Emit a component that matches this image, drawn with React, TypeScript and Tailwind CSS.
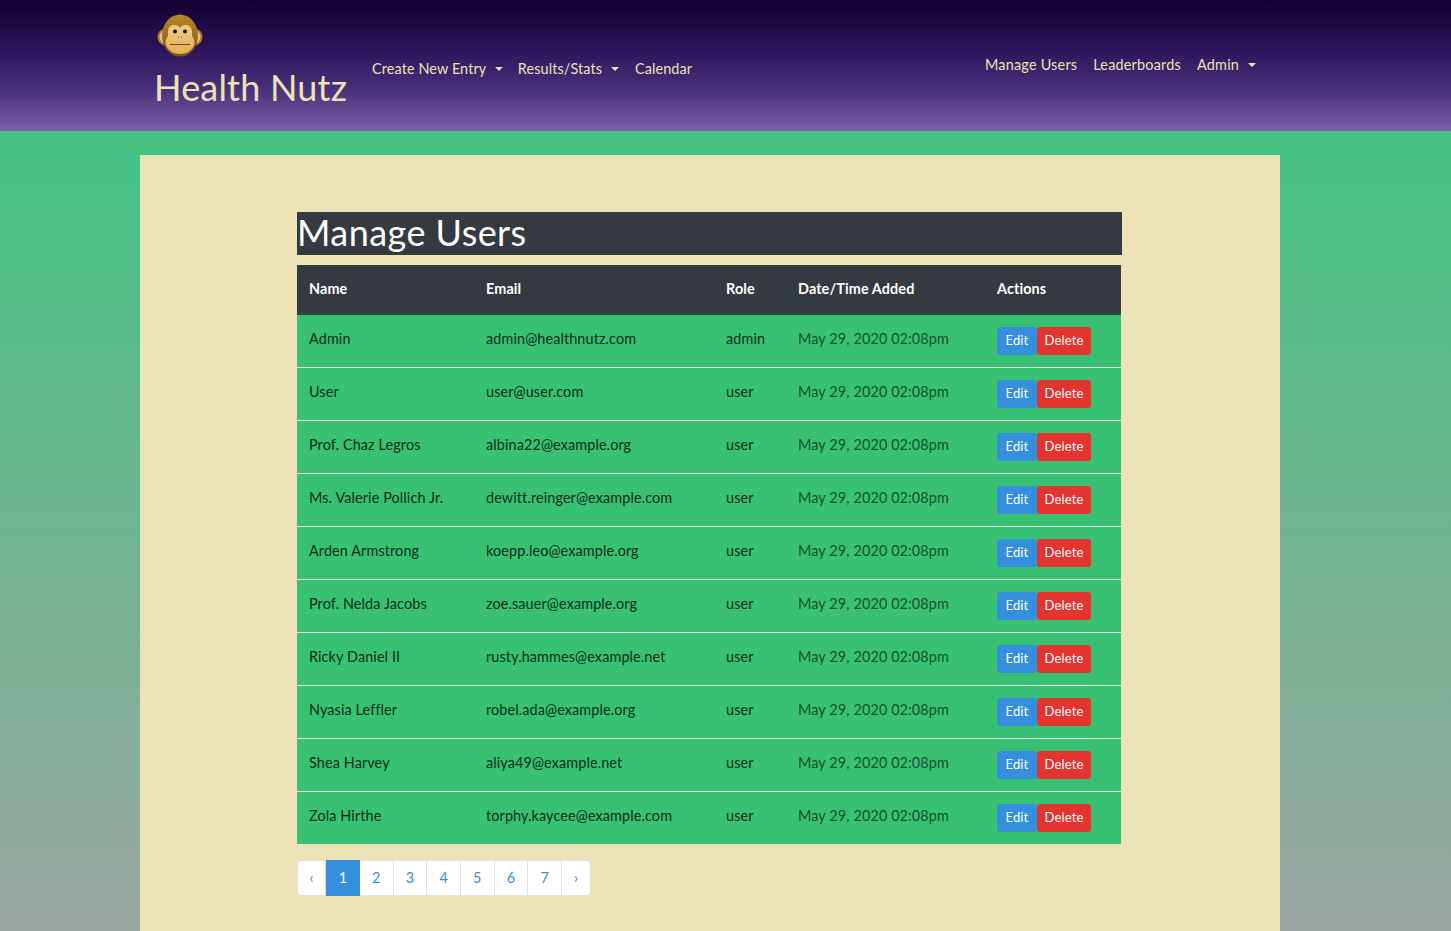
const users = [
  { name: "Admin", email: "admin@healthnutz.com", role: "admin" },
  { name: "User", email: "user@user.com", role: "user" },
  { name: "Prof. Chaz Legros", email: "albina22@example.org", role: "user" },
  { name: "Ms. Valerie Pollich Jr.", email: "dewitt.reinger@example.com", role: "user" },
  { name: "Arden Armstrong", email: "koepp.leo@example.org", role: "user" },
  { name: "Prof. Nelda Jacobs", email: "zoe.sauer@example.org", role: "user" },
  { name: "Ricky Daniel II", email: "rusty.hammes@example.net", role: "user" },
  { name: "Nyasia Leffler", email: "robel.ada@example.org", role: "user" },
  { name: "Shea Harvey", email: "aliya49@example.net", role: "user" },
  { name: "Zola Hirthe", email: "torphy.kaycee@example.com", role: "user" },
]

const pages = ["2", "3", "4", "5", "6", "7"]

const Caret = () => (
  <span className="ml-[5px] inline-block h-0 w-0 translate-y-[-3px] border-x-[4px] border-t-[4px] border-x-transparent border-t-[#ebe3b5]" />
)

const Monkey = () => (
  <svg width="48" height="46" viewBox="0 0 48 46" className="block">
    <defs>
      <linearGradient id="fur" x1="0" y1="0" x2="0" y2="1">
        <stop offset="0" stopColor="#b8862c" />
        <stop offset="1" stopColor="#7d5512" />
      </linearGradient>
      <linearGradient id="face" x1="0" y1="0" x2="0" y2="1">
        <stop offset="0" stopColor="#eecb85" />
        <stop offset="1" stopColor="#e6ae55" />
      </linearGradient>
    </defs>
    <ellipse cx="8.5" cy="24" rx="7" ry="8" fill="#a87a24" />
    <ellipse cx="8.5" cy="24" rx="5" ry="6" fill="#e6c488" />
    <ellipse cx="39.5" cy="24" rx="7" ry="8" fill="#a87a24" />
    <ellipse cx="39.5" cy="24" rx="5" ry="6" fill="#e6c488" />
    <ellipse cx="24" cy="22.5" rx="18" ry="21" fill="url(#fur)" />
    <path d="M24 15c2-4 10-4 11.500 1 1 3 .5 6 .5 7 2 3 3 6 2 9-2 6-8 9-14 9s-12-3-14-9c-1-3 0-6 2-9 0-1-.5-4 .5-7C13.500 11 22 11 24 15z" fill="url(#face)" />
    <circle cx="19" cy="18.500" r="2" fill="#1d1206" />
    <circle cx="29" cy="18.500" r="2" fill="#1d1206" />
    <circle cx="22.500" cy="24" r=".7" fill="#a5712a" />
    <circle cx="25.500" cy="24" r=".7" fill="#a5712a" />
    <path d="M14 31.500h20" stroke="#6b4712" strokeWidth="1" fill="none" />
  </svg>
)

export default function App() {
  return (
    <div className="min-h-screen overflow-hidden bg-[linear-gradient(180deg,#36c87e_0%,#9aa5a0_100%)] font-['Lato','Noto_Sans',sans-serif] text-[14.400px] tracking-[0.12px] text-[#212529]">
      <nav className="h-[131px] bg-[linear-gradient(180deg,#12002f_0%,#2a1359_35%,#48307a_68%,#7c60a8_100%)]">
        <div className="ml-[140px] flex h-full w-[1140px] items-center pl-[15px] pr-[16px] text-[#ebe3b5]">
          <div className="mr-[9px] w-[200px] pb-[5px] pl-[1px]">
            <div className="mt-px">
              <Monkey />
            </div>
            <div className="-ml-[2px] mt-[1px] text-[36px] leading-[54px] tracking-[0.2px]">Health Nutz</div>
          </div>
          <ul className="flex pt-[6px]">
            <li className="px-2 py-2">Create New Entry <Caret /></li>
            <li className="px-2 py-2 -ml-px">Results/Stats <Caret /></li>
            <li className="px-2 py-2">Calendar</li>
          </ul>
          <ul className="ml-auto flex pb-[2px] tracking-[0.22px]">
            <li className="px-2 py-2">Manage Users</li>
            <li className="px-2 py-2">Leaderboards</li>
            <li className="px-2 py-2">Admin <Caret /></li>
          </ul>
        </div>
      </nav>

      <main className="ml-[140px] mt-6 h-[776px] w-[1140px] bg-[#ebe3b5] pl-[157px] pt-[57px]">
        <h1 className="h-[43px] w-[825px] bg-[#343a40] text-[36px] leading-[41px] tracking-[0.45px] text-white">Manage Users</h1>

        <table className="mt-[10px] w-[824px] table-fixed border-collapse">
          <colgroup>
            <col className="w-[177px]" />
            <col className="w-[240px]" />
            <col className="w-[72px]" />
            <col className="w-[199px]" />
            <col className="w-[136px]" />
          </colgroup>
          <thead>
            <tr className="h-[49px] border-b-2 border-[#2d4a3e] bg-[#343a40] text-left font-bold text-white">
              <th className="px-3 pt-[0.5px]">Name</th>
              <th className="px-3 pt-[0.5px]">Email</th>
              <th className="px-3 pt-[0.5px]">Role</th>
              <th className="px-3 pt-[0.5px]">Date/Time Added</th>
              <th className="px-3 pt-[0.5px]">Actions</th>
            </tr>
          </thead>
          <tbody>
            {users.map((user, index) => (
              <tr key={user.email} className={`h-[53px] bg-[#38c172] text-[#0a2e1a] ${index > 0 ? "border-t border-[#dff3e6]" : ""}`}>
                <td className="px-3 pb-[4px]">{user.name}</td>
                <td className="px-3 pb-[4px]">{user.email}</td>
                <td className="px-3 pb-[4px]">{user.role}</td>
                <td className="px-3 pb-[4px] text-[#14532f]">May 29, 2020 02:08pm</td>
                <td className="px-3">
                  <div className="flex text-[13px] leading-[20px] text-white">
                    <span className="flex h-[28px] w-[40px] items-center justify-center rounded-[3px] bg-[#3490dc] pb-px">Edit</span>
                    <span className="flex h-[28px] w-[54px] items-center justify-center rounded-[3px] bg-[#e3342f] pb-px">Delete</span>
                  </div>
                </td>
              </tr>
            ))}
          </tbody>
        </table>

        <ul className="mt-4 flex h-[36px] w-[294px] items-stretch text-[#3490dc]">
          <li className="flex w-[29px] items-center justify-center rounded-l-[4px] border border-[#dee2e6] bg-white text-[#6c757d]">‹</li>
          <li className="flex w-[34px] items-center justify-center bg-[#3490dc] text-white">1</li>
          {pages.map((page) => (
            <li key={page} className="flex w-[33.700px] items-center justify-center border border-l-0 border-[#dee2e6] bg-white">{page}</li>
          ))}
          <li className="flex w-[29px] items-center justify-center rounded-r-[4px] border border-l-0 border-[#dee2e6] bg-white text-[#6c757d]">›</li>
        </ul>
      </main>
    </div>
  )
}
